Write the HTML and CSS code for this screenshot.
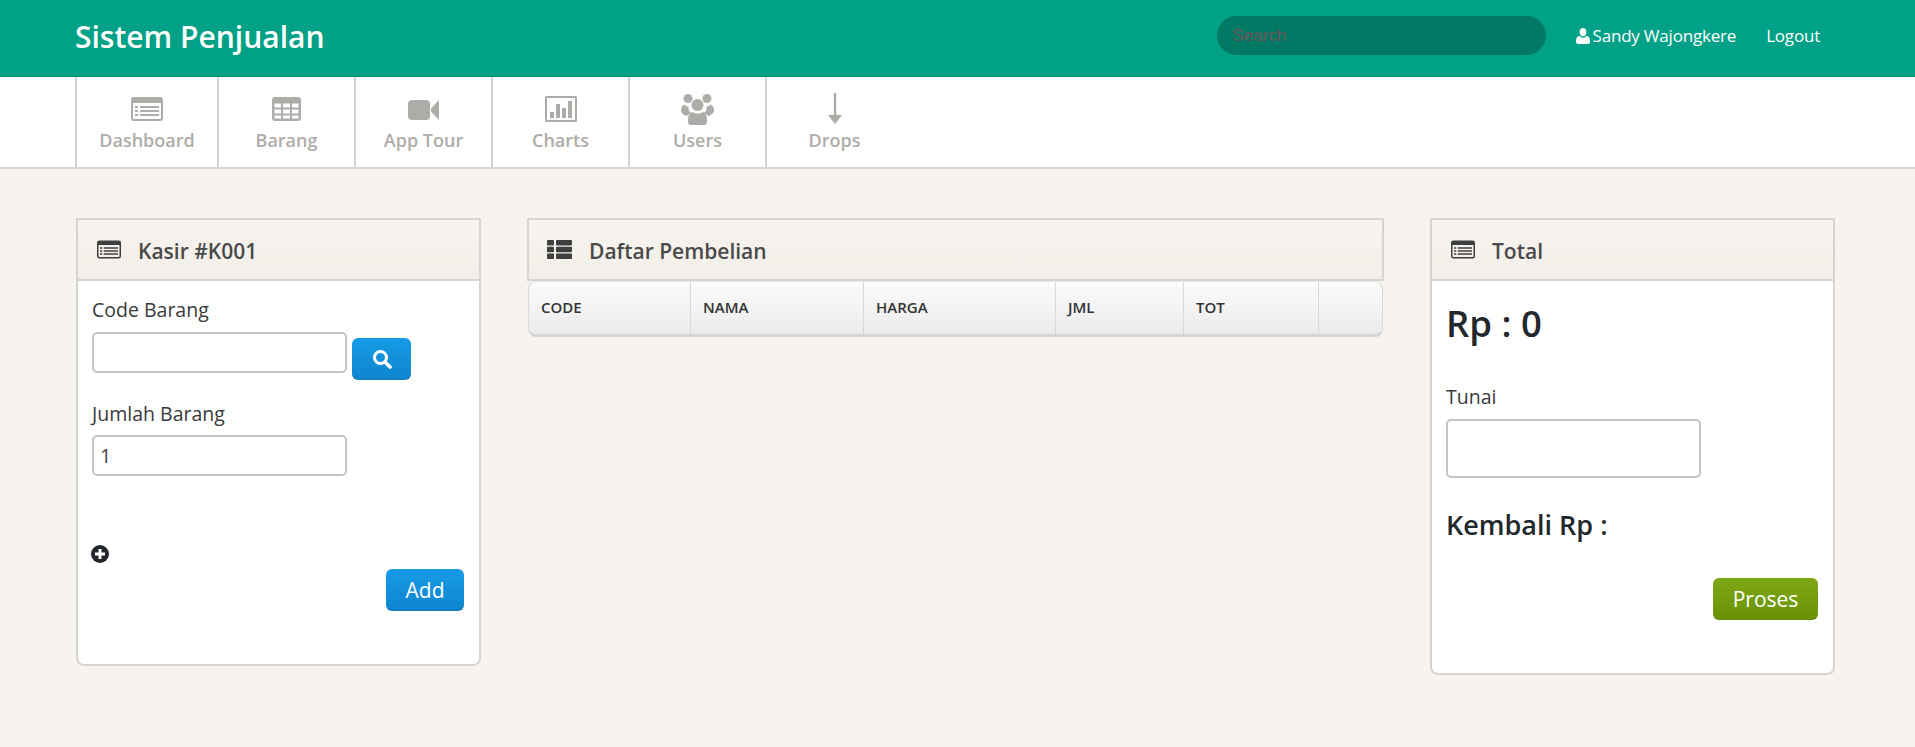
FILE: index.html
```html
<!DOCTYPE html>
<html lang="id">
<head>
<meta charset="utf-8">
<title>Sistem Penjualan</title>
<link rel="stylesheet" href="styles.css">
</head>
<body>
<header class="topbar">
  <a class="brand">Sistem Penjualan</a>
  <div class="top-right">
    <input class="search" type="text" placeholder="Search">
    <a class="top-link user"><svg class="ic-user" viewBox="0 0 14 16"><path d="M7 0c2.100 0 3.400 1.700 3.400 3.900S9 8.300 7 8.300 3.600 6.100 3.600 3.900 4.900 0 7 0zM3.500 7.800C4.300 9 5.500 9.700 7 9.700s2.700-.7 3.500-1.900c2 .5 3.500 1.700 3.500 4.600v1.300c0 1.300-1 2.300-2.200 2.300H2.200C1 16 0 15 0 13.700v-1.300c0-2.900 1.500-4.100 3.500-4.600z"/></svg>Sandy Wajongkere</a>
    <a class="top-link logout">Logout</a>
  </div>
</header>

<nav class="subnav">
  <a class="nav-item nav-first"><svg class="nav-ic ic-list" width="32" height="24" viewBox="0 0 32 24"><path fill-rule="evenodd" d="M3 0h26a3 3 0 0 1 3 3v18a3 3 0 0 1-3 3H3a3 3 0 0 1-3-3V3a3 3 0 0 1 3-3zM2 6v15a1 1 0 0 0 1 1h26a1 1 0 0 0 1-1V6zM4 9h3v2H4zM9 9h19v2H9zM4 13h3v2H4zM9 13h19v2H9zM4 17h3v2H4zM9 17h19v2H9z"/></svg><span>Dashboard</span></a>
  <a class="nav-item"><svg class="nav-ic ic-list" width="29" height="24" viewBox="0 0 29 24"><path fill-rule="evenodd" d="M3 0h23a3 3 0 0 1 3 3v18a3 3 0 0 1-3 3H3a3 3 0 0 1-3-3V3a3 3 0 0 1 3-3zM2.500 6.500v4h6.500v-4zM11 6.500v4h7v-4zM20 6.500v4h6.500v-4zM2.500 12.500v4h6.500v-4zM11 12.500v4h7v-4zM20 12.500v4h6.500v-4zM2.500 18.500v3h6.500v-3zM11 18.500v3h7v-3zM20 18.500v3h6.500v-3z"/></svg><span>Barang</span></a>
  <a class="nav-item"><svg class="nav-ic ic-video" width="31" height="24" viewBox="0 0 31 24"><path d="M4 2h14a4 4 0 0 1 4 4v12a4 4 0 0 1-4 4H4a4 4 0 0 1-4-4V6a4 4 0 0 1 4-4zM23 10.500 31 2v20l-8-8.500z"/></svg><span>App Tour</span></a>
  <a class="nav-item"><svg class="nav-ic ic-chart" width="32" height="26" viewBox="0 0 32 26"><path fill-rule="evenodd" d="M1.500 0h29A1.500 1.500 0 0 1 32 1.500v23a1.500 1.500 0 0 1-1.500 1.500h-29A1.500 1.500 0 0 1 0 24.500v-23A1.500 1.500 0 0 1 1.500 0zM2 2v22h28V2zM5 16h4v6H5zM11 8h4v14h-4zM17 12h4v10h-4zM23 5h4v17h-4z"/></svg><span>Charts</span></a>
  <a class="nav-item"><svg class="nav-ic ic-users" width="33" height="31" viewBox="0 0 33 31"><circle cx="7" cy="4.500" r="4.500"/><circle cx="26" cy="4.500" r="4.500"/><circle cx="16.500" cy="11" r="6"/><path d="M3.500 10.500c1 1.500 2.500 2 4 2-.5 2.500.5 5 2.500 6.500-2 1-3.500 2-4.500 3C2.500 21 0 19 0 16.500c0-3 1.500-5.500 3.500-6zM29.500 10.500c-1 1.500-2.500 2-4 2 .5 2.500-.5 5-2.500 6.500 2 1 3.500 2 4.500 3 3-1 5.500-3 5.500-5.500 0-3-1.500-5.500-3.500-6zM11.500 18c3 2.200 7 2.200 10 0 3 1 4.500 3.500 4.500 7v3c0 1.700-1.300 3-3 3H10c-1.700 0-3-1.300-3-3v-3c0-3.500 1.500-6 4.500-7z"/></svg><span>Users</span></a>
  <a class="nav-item"><svg class="nav-ic ic-drop" width="14" height="31" viewBox="0 0 14 31"><path d="M5.800 0h2.400v22H14l-7 9-7-9h5.800z"/></svg><span>Drops</span></a>
</nav>

<main class="content">
  <section class="panel panel-kasir">
    <div class="panel-head"><svg class="head-ic" width="24" height="19" viewBox="0 0 32 24"><path fill-rule="evenodd" d="M3 0h26a3 3 0 0 1 3 3v18a3 3 0 0 1-3 3H3a3 3 0 0 1-3-3V3a3 3 0 0 1 3-3zM2 6v15a1 1 0 0 0 1 1h26a1 1 0 0 0 1-1V6zM4 9h3v2H4zM9 9h19v2H9zM4 13h3v2H4zM9 13h19v2H9zM4 17h3v2H4zM9 17h19v2H9z"/></svg><h2>Kasir #K001</h2></div>
    <div class="panel-body kasir-body">
      <label class="field-label">Code Barang</label>
      <div class="code-row">
        <input class="text-input" type="text">
        <button class="btn btn-blue btn-search" aria-label="Cari"><svg width="20" height="20" viewBox="0 0 20 20"><circle cx="8.500" cy="8.500" r="6" fill="none" stroke="#fff" stroke-width="3"/><path d="m13 13 5 5" stroke="#fff" stroke-width="3.600" stroke-linecap="round"/></svg></button>
      </div>
      <label class="field-label label-jumlah">Jumlah Barang</label>
      <input class="text-input" type="text" value="1">
      <svg class="plus" width="18" height="18" viewBox="0 0 18 18"><circle cx="9" cy="9" r="9" fill="#24282c"/><path d="M7.500 4h3v3.500H14v3h-3.500V14h-3v-3.500H4v-3h3.500z" fill="#fff"/></svg>
      <div class="actions"><button class="btn btn-blue btn-add">Add</button></div>
    </div>
  </section>

  <section class="panel panel-list">
    <div class="panel-head"><svg class="head-ic" width="25" height="19" viewBox="0 0 25 19"><path d="M1 0h5a1 1 0 0 1 1 1v3.500a1 1 0 0 1-1 1H1a1 1 0 0 1-1-1V1a1 1 0 0 1 1-1zM10 0h14a1 1 0 0 1 1 1v3.500a1 1 0 0 1-1 1H10a1 1 0 0 1-1-1V1a1 1 0 0 1 1-1zM1 6.800h5a1 1 0 0 1 1 1v3.400a1 1 0 0 1-1 1H1a1 1 0 0 1-1-1V7.800a1 1 0 0 1 1-1zM10 6.800h14a1 1 0 0 1 1 1v3.400a1 1 0 0 1-1 1H10a1 1 0 0 1-1-1V7.800a1 1 0 0 1 1-1zM1 13.500h5a1 1 0 0 1 1 1V18a1 1 0 0 1-1 1H1a1 1 0 0 1-1-1v-3.500a1 1 0 0 1 1-1zM10 13.500h14a1 1 0 0 1 1 1V18a1 1 0 0 1-1 1H10a1 1 0 0 1-1-1v-3.500a1 1 0 0 1 1-1z"/></svg><h2>Daftar Pembelian</h2></div>
    <table class="grid">
      <thead>
        <tr>
          <th class="col-code">CODE</th>
          <th class="col-nama">NAMA</th>
          <th class="col-harga">HARGA</th>
          <th class="col-jml">JML</th>
          <th class="col-tot">TOT</th>
          <th></th>
        </tr>
      </thead>
    </table>
  </section>

  <section class="panel panel-total">
    <div class="panel-head"><svg class="head-ic" width="24" height="19" viewBox="0 0 32 24"><path fill-rule="evenodd" d="M3 0h26a3 3 0 0 1 3 3v18a3 3 0 0 1-3 3H3a3 3 0 0 1-3-3V3a3 3 0 0 1 3-3zM2 6v15a1 1 0 0 0 1 1h26a1 1 0 0 0 1-1V6zM4 9h3v2H4zM9 9h19v2H9zM4 13h3v2H4zM9 13h19v2H9zM4 17h3v2H4zM9 17h19v2H9z"/></svg><h2>Total</h2></div>
    <div class="panel-body total-body">
      <div class="amount">Rp : 0</div>
      <label class="field-label label-tunai">Tunai</label>
      <input class="text-input input-tall" type="text">
      <div class="change">Kembali Rp :</div>
      <div class="actions"><button class="btn btn-green">Proses</button></div>
    </div>
  </section>
</main>
</body>
</html>
```

FILE: styles.css
```css
* { box-sizing: border-box; }

html, body {
  margin: 0;
  height: 100%;
}

body {
  background: #f7f3ee;
  font-family: "Open Sans", "Liberation Sans", sans-serif;
  color: #333;
  overflow: hidden;
}

.topbar {
  height: 77px;
  background: #00a186;
  border-bottom: 1px solid #00876f;
  display: flex;
  align-items: center;
  justify-content: space-between;
  padding: 0 95px 0 75px;
}

.brand {
  color: #fff;
  font-size: 30px;
  font-weight: 600;
  line-height: 1;
  margin-top: -3px;
}

.top-right {
  display: flex;
  align-items: center;
  margin-top: -3px;
}

.search {
  width: 329px;
  height: 39px;
  border: 0;
  border-radius: 20px;
  background: #007a65;
  padding: 0 16px;
  font: 17px "Liberation Sans", sans-serif;
  margin-right: 30px;
  margin-top: -2px;
  outline: 0;
}

.search::placeholder {
  color: #6f5558;
  opacity: 1;
}

.top-link {
  color: #fff;
  font-size: 17px;
  line-height: 22px;
  letter-spacing: -0.2px;
  margin-bottom: 2px;
}

.user {
  display: flex;
  align-items: center;
  gap: 3px;
}

.ic-user {
  width: 14px;
  height: 16px;
  fill: #fff;
}

.logout {
  margin-left: 30px;
}

.subnav {
  height: 92px;
  background: #fff;
  border-bottom: 2px solid #d7d7d5;
  display: flex;
  padding-left: 75px;
}

.nav-item {
  width: 137px;
  height: 90px;
  border-left: 2px solid #d3d3d1;
  display: flex;
  flex-direction: column;
  align-items: center;
  color: #aeaca8;
  font-size: 18px;
  font-weight: 600;
  position: relative;
}

.nav-first {
  width: 142px;
}

.nav-ic {
  fill: #aeaca8;
  position: absolute;
}

.ic-list { bottom: 46px; }
.ic-video { bottom: 45px; }
.ic-chart { bottom: 45px; }
.ic-users { bottom: 42px; }
.ic-drop { bottom: 43px; }

.nav-item span {
  position: absolute;
  top: 50px;
  line-height: 26px;
}

.content {
  display: flex;
  align-items: flex-start;
  padding: 49px 80px 0 76px;
  gap: 46px;
}

.panel {
  width: 405px;
  flex: none;
}

.panel-list {
  width: 857px;
}

.panel-head {
  height: 63px;
  display: flex;
  align-items: center;
  gap: 17px;
  padding-left: 19px;
  border: 2px solid #d6d4ce;
  background: linear-gradient(#f8f4ef, #f1ede7);
}

.panel-list .panel-head {
  padding-left: 18px;
}

.head-ic {
  fill: #3f3f3f;
  flex: none;
}

.panel-head h2 {
  margin: 2px 0 0;
  font-size: 21px;
  font-weight: 600;
  color: #4a4a4a;
  line-height: 26px;
}

.panel-body {
  background: #fff;
  border: 2px solid #d6d4ce;
  border-top: 0;
  border-radius: 0 0 8px 8px;
  padding: 0 14px;
}

.kasir-body {
  height: 385px;
}

.total-body {
  height: 394px;
}

.field-label {
  display: block;
  font-size: 19.5px;
  line-height: 28px;
  color: #3a3a3a;
}

.kasir-body .field-label {
  height: 51px;
  padding-top: 15px;
}

.code-row {
  display: flex;
  align-items: flex-start;
  gap: 5px;
}

.text-input {
  display: block;
  width: 255px;
  height: 41px;
  border: 2px solid #c4c4c4;
  border-radius: 5px;
  background: #fff;
  padding: 0 6px;
  font: 20px "Open Sans", sans-serif;
  color: #444;
  outline: 0;
}

.input-tall {
  height: 59px;
}

.btn {
  border: 0;
  border-bottom: 1px solid rgba(0, 0, 0, 0.18);
  border-radius: 6px;
  color: #fff;
  font: 21px "Open Sans", sans-serif;
  padding: 0;
  display: flex;
  align-items: center;
  justify-content: center;
}

.btn-blue {
  background: linear-gradient(#169be6, #0f85cf);
}

.btn-green {
  width: 105px;
  height: 42px;
  background: linear-gradient(#7ea815, #6a9207);
}

.btn-search {
  width: 59px;
  height: 42px;
  margin-top: 6px;
}

.kasir-body .label-jumlah {
  margin-top: 5px;
  height: 50px;
}

.plus {
  display: block;
  margin-top: 69px;
  margin-left: -1px;
}

.actions {
  display: flex;
  justify-content: flex-end;
}

.kasir-body .actions {
  margin-top: 6px;
}

.btn-add {
  width: 78px;
  height: 42px;
  margin-right: 1px;
}

.amount {
  font-size: 36.5px;
  font-weight: 600;
  line-height: 50px;
  color: #23282c;
  height: 82px;
  padding-top: 17px;
}

.label-tunai {
  margin-top: 20px;
  height: 36px;
}

.change {
  margin-top: 29px;
  font-size: 27px;
  font-weight: 600;
  line-height: 36px;
  color: #23282c;
}

.total-body .actions {
  margin-top: 35px;
  margin-right: 1px;
}

.grid {
  width: 855px;
  margin-left: 1px;
  border-collapse: separate;
  border-spacing: 0;
  table-layout: fixed;
  height: 56px;
  border: 1px solid #d9d9d7;
  border-bottom: 3px solid #d3d3d1;
  border-top: 1px solid #e4e4e2;
  border-radius: 8px;
  background: linear-gradient(#fbfbfb, #ebebeb);
}

.grid th {
  border-right: 1px solid #d8d8d8;
  font-size: 15px;
  font-weight: 600;
  text-align: left;
  color: #333;
  padding: 0 0 2px 12px;
}

.grid th:last-child {
  border-right: 0;
}

.col-code { width: 162px; }
.col-nama { width: 173px; }
.col-harga { width: 192px; }
.col-jml { width: 128px; }
.col-tot { width: 135px; }
```
